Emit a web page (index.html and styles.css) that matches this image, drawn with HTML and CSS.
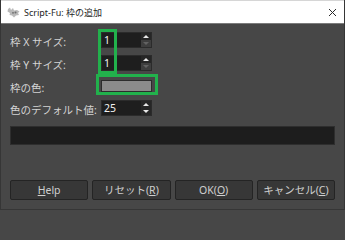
FILE: index.html
```html
<!DOCTYPE html>
<html lang="ja">
<head>
<meta charset="utf-8">
<title>Script-Fu: 枠の追加</title>
<link rel="stylesheet" href="styles.css">
</head>
<body>
<div class="window">
  <div class="titlebar">
    <svg class="app-icon" width="13" height="11" viewBox="0 0 13 11">
      <path d="M1 2 L3 0.5 L4 3 L6 1 L7 3.5 L10 3 L12.5 4.5 L11 6 L12 8 L9 8.5 L7 10.5 L5 8.5 L2.5 8 L3 6 L0.5 4.5 Z" fill="#b9b9b9"/>
      <circle cx="8.5" cy="5.5" r="1" fill="#6d6d6d"/>
      <circle cx="6" cy="5.8" r="0.9" fill="#6d6d6d"/>
    </svg>
    <span class="title">Script-Fu: 枠の追加</span>
    <svg class="close" width="9" height="9" viewBox="0 0 9 9">
      <path d="M1 1 L8 8 M8 1 L1 8" stroke="#2a2a2a" stroke-width="1"/>
    </svg>
  </div>
  <div class="content">
    <div class="form">
      <span class="label">枠 X サイズ:</span>
      <div class="spin">
        <span class="spin-value">1</span>
        <div class="spin-btns">
          <span class="spin-btn"><i class="arrow-up"></i></span>
          <span class="spin-btn off"><i class="arrow-down"></i></span>
        </div>
      </div>
      <span class="label">枠 Y サイズ:</span>
      <div class="spin">
        <span class="spin-value">1</span>
        <div class="spin-btns">
          <span class="spin-btn"><i class="arrow-up"></i></span>
          <span class="spin-btn off"><i class="arrow-down"></i></span>
        </div>
      </div>
      <span class="label">枠の色:</span>
      <div class="swatch"></div>
      <span class="label">色のデフォルト値:</span>
      <div class="spin">
        <span class="spin-value">25</span>
        <div class="spin-btns">
          <span class="spin-btn"><i class="arrow-up"></i></span>
          <span class="spin-btn"><i class="arrow-down"></i></span>
        </div>
      </div>
    </div>
    <div class="progress"></div>
    <div class="buttons">
      <button class="btn"><u>H</u>elp</button>
      <button class="btn">リセット(<u>R</u>)</button>
      <button class="btn">OK(<u>O</u>)</button>
      <button class="btn">キャンセル(<u>C</u>)</button>
    </div>
  </div>
  <div class="mark mark-size"></div>
  <div class="mark mark-color"></div>
</div>
</body>
</html>
```
FILE: styles.css
```css
* { box-sizing: border-box; }
html, body { margin: 0; padding: 0; background: #474747; }
body { font-family: "Noto Sans", "Noto Sans CJK JP", sans-serif; }

.window {
  position: relative;
  width: 345px;
  height: 210px;
  background: #474747;
  border-left: 1px solid #363636;
  border-right: 1px solid #363636;
  border-bottom: 1px solid #363636;
  display: flex;
  flex-direction: column;
}

.titlebar {
  height: 24px;
  flex: none;
  background: #ffffff;
  border-top: 1px solid #d6d6d6;
  border-bottom: 1px solid #7c7c7c;
  display: flex;
  align-items: center;
  padding-left: 6px;
  padding-right: 7px;
}
.app-icon { flex: none; margin-right: 4px; }
.title { font-size: 9px; color: #1e1e1e; flex: 1; padding-top: 1px; }
.close { flex: none; }

.content {
  flex: 1;
  display: flex;
  flex-direction: column;
  padding: 6px 9px 0 9px;
}

.form {
  display: grid;
  grid-template-columns: 91px 51px;
  grid-template-rows: 20px 20px 19px 20px;
  row-gap: 3px;
  align-items: center;
}
.label {
  font-size: 10.5px;
  color: #d4d4d4;
  padding-top: 3px;
}

.spin {
  height: 16px;
  display: flex;
  background: #1e1e1e;
  border: 1px solid #2b2b2b;
}
.spin-value {
  flex: 1;
  font-size: 10.5px;
  color: #f2f2f2;
  line-height: 14px;
  padding-left: 2px;
}
.spin-btns {
  width: 10px;
  display: flex;
  flex-direction: column;
}
.spin-btn {
  flex: 1;
  display: flex;
  align-items: center;
  justify-content: center;
  background: #262626;
}
.spin-btn.off { background: #3e3e3e; }
.arrow-up, .arrow-down {
  width: 0;
  height: 0;
  border-left: 3px solid transparent;
  border-right: 3px solid transparent;
}
.arrow-up { border-bottom: 3px solid #e8e8e8; }
.arrow-down { border-top: 3px solid #e8e8e8; }
.spin-btn.off .arrow-down { border-top-color: #626262; }

.swatch {
  height: 12px;
  background: #8b8b8b;
  border: 1px solid #2c2c2c;
}

.progress {
  margin-top: 8px;
  height: 19px;
  background: #1d1d1d;
  border: 1px solid #2e2e2e;
}

.buttons {
  margin-top: 35px;
  display: grid;
  grid-template-columns: repeat(4, 1fr);
  column-gap: 4px;
}
.btn {
  height: 20px;
  padding: 0;
  font-family: "Noto Sans", "Noto Sans CJK JP", sans-serif;
  font-size: 10.5px;
  color: #cfcfcf;
  background: #373737;
  border: 1px solid #242424;
  border-radius: 2px;
  line-height: 17px;
}
.btn u { text-underline-offset: 1px; }

.mark {
  position: absolute;
  border: 3px solid #22b14c;
}
.mark-size { left: 97px; top: 29px; width: 19px; height: 45px; }
.mark-color { left: 95px; top: 74px; width: 62px; height: 21px; }
```
